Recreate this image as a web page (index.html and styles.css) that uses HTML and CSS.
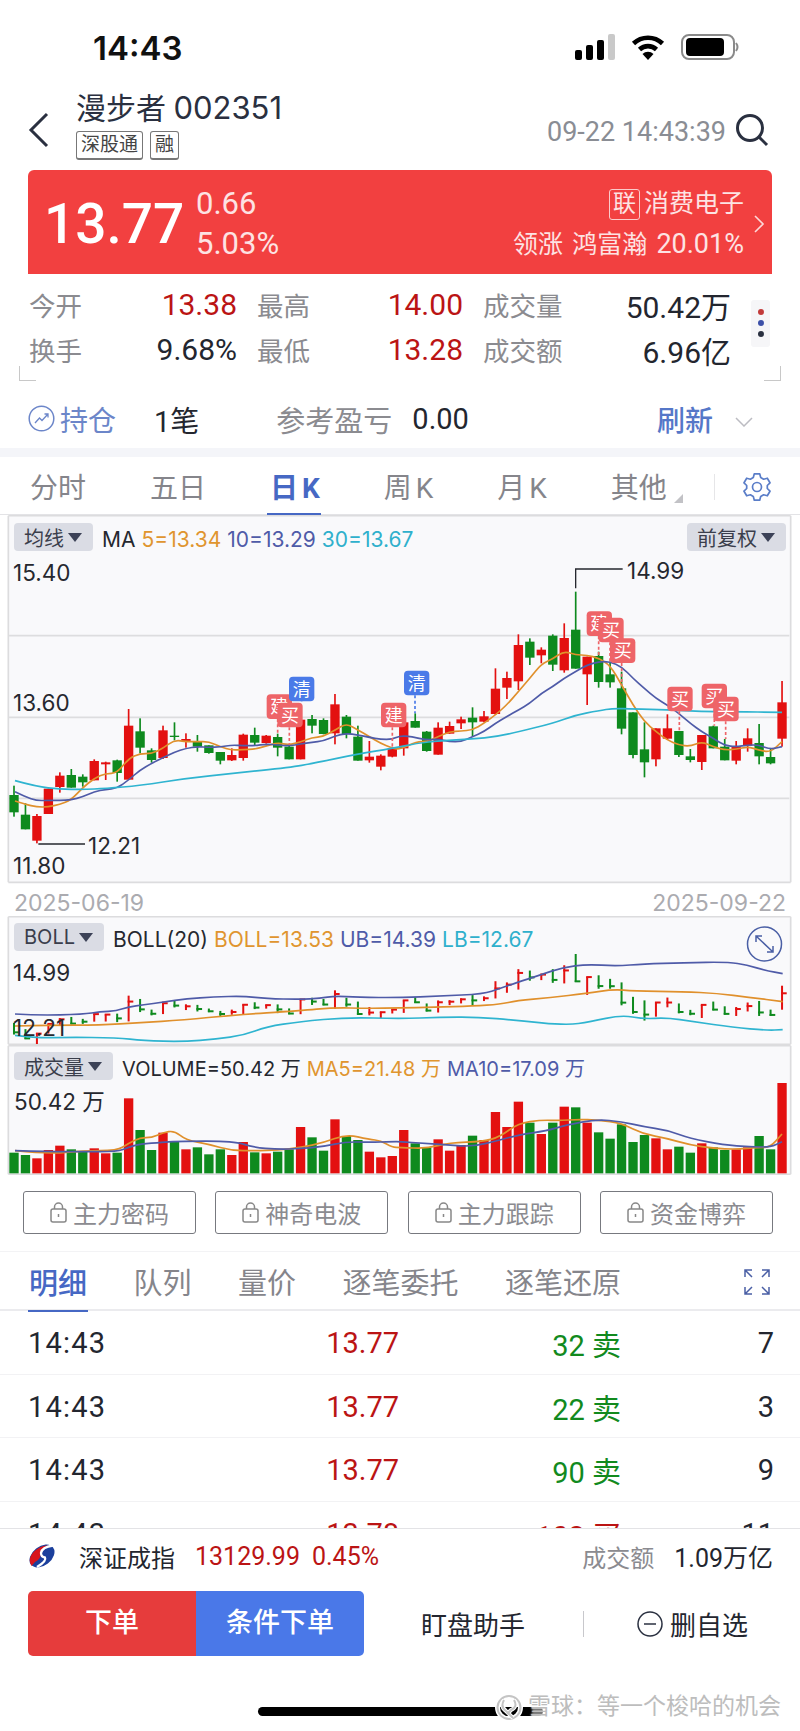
FILE: index.html
```html
<!DOCTYPE html>
<html lang="zh-CN">
<head>
    <meta charset="UTF-8">
    <meta name="viewport" content="width=device-width, initial-scale=1.0">
    <title>漫步者 002351</title>
    <link rel="stylesheet" href="styles.css">
</head>
<body>
    <div class="status-bar">
        <span class="clock">14:43</span>
        <div class="status-icons">
            <svg class="ico-signal" width="40" height="26" viewBox="0 0 40 26">
                <rect x="0" y="16" width="7" height="10" rx="2" fill="#000"/>
                <rect x="11" y="11" width="7" height="15" rx="2" fill="#000"/>
                <rect x="22" y="6" width="7" height="20" rx="2" fill="#000"/>
                <rect x="33" y="0" width="7" height="26" rx="2" fill="#c9c9c9"/>
            </svg>
            <svg class="ico-wifi" width="34" height="26" viewBox="0 0 34 26">
                <path d="M2.5 9.5 A21 21 0 0 1 31.5 9.5" fill="none" stroke="#000" stroke-width="4.6"/>
                <path d="M8.5 15.5 A12.5 12.5 0 0 1 25.5 15.5" fill="none" stroke="#000" stroke-width="4.6"/>
                <path d="M17 26 L11.5 20 A8 8 0 0 1 22.5 20 Z" fill="#000"/>
            </svg>
            <svg class="ico-battery" width="58" height="26" viewBox="0 0 58 26">
                <rect x="1" y="1" width="52" height="24" rx="7" fill="none" stroke="#8a8a8a" stroke-width="2"/>
                <rect x="5" y="4" width="38" height="18" rx="4" fill="#000"/>
                <path d="M55 9 Q58 13 55 17" fill="none" stroke="#8a8a8a" stroke-width="2"/>
            </svg>
        </div>
    </div>

    <div class="nav-bar">
        <svg class="back" width="22" height="36" viewBox="0 0 22 36">
            <path d="M19 2 L3 18 L19 34" fill="none" stroke="#2a3040" stroke-width="3"/>
        </svg>
        <div class="stock">
            <div class="stock-name">漫步者 <span class="code">002351</span></div>
            <div class="stock-tags">
                <span class="stock-tag">深股通</span>
                <span class="stock-tag">融</span>
            </div>
        </div>
        <span class="timestamp">09-22 14:43:39</span>
        <svg class="search" width="34" height="34" viewBox="0 0 34 34">
            <circle cx="15" cy="15" r="12.5" fill="none" stroke="#2a3040" stroke-width="3"/>
            <path d="M24 24 L32 32" stroke="#2a3040" stroke-width="3"/>
        </svg>
    </div>

    <div class="quote">
        <div class="quote-price">13.77</div>
        <div class="quote-change">
            <span>0.66</span>
            <span>5.03%</span>
        </div>
        <div class="quote-sector">
            <div class="sector-name"><span class="sector-tag">联</span>消费电子</div>
            <div class="sector-lead">领涨 鸿富瀚 <span class="lead-pct">20.01%</span></div>
        </div>
        <svg class="quote-arrow" width="12" height="18" viewBox="0 0 12 18">
            <path d="M2 1 L10 9 L2 17" fill="none" stroke="#fff" stroke-opacity=".8" stroke-width="1.6"/>
        </svg>
    </div>

    <div class="stats">
        <div class="stats-grid">
            <div class="stat"><span class="stat-label">今开</span><span class="up">13.38</span></div>
            <div class="stat"><span class="stat-label">最高</span><span class="up">14.00</span></div>
            <div class="stat"><span class="stat-label">成交量</span><span>50.42万</span></div>
            <div class="stat"><span class="stat-label">换手</span><span>9.68%</span></div>
            <div class="stat"><span class="stat-label">最低</span><span class="up">13.28</span></div>
            <div class="stat"><span class="stat-label">成交额</span><span>6.96亿</span></div>
        </div>
        <div class="stat-dots"><i class="dot-red"></i><i class="dot-blue"></i><i class="dot-dark"></i></div>
    </div>

    <div class="position">
        <svg class="pos-icon" width="27" height="27" viewBox="0 0 27 27">
            <circle cx="13.500" cy="13.500" r="12.300" fill="none" stroke="#6c86c9" stroke-width="1.500"/>
            <path d="M7 18 L11.500 13 L14 15.500 L20 9 M16.500 9 H20 V12.500" fill="none" stroke="#6c86c9" stroke-width="1.300"/>
        </svg>
        <span class="pos-title">持仓</span>
        <span class="pos-count">1笔</span>
        <span class="pos-label">参考盈亏</span>
        <span class="pos-value">0.00</span>
        <span class="pos-refresh">刷新</span>
        <svg class="pos-chevron" width="18" height="10" viewBox="0 0 18 10">
            <path d="M1 1 L9 9 L17 1" fill="none" stroke="#bcbcc2" stroke-width="1.500"/>
        </svg>
    </div>

    <div class="band"></div>

    <div class="periods">
        <span class="period">分时</span>
        <span class="period">五日</span>
        <span class="period active">日 K</span>
        <span class="period">周 K</span>
        <span class="period">月 K</span>
        <span class="period more">其他</span>
        <span class="period-divider"></span>
        <svg class="gear" width="30" height="30" viewBox="0 0 30 30">
            <path d="M12.300 1.800 H17.700 L18.700 5.500 L21.600 7.200 L25.300 6.200 L28 10.800 L25.300 13.500 V16.500 L28 19.200 L25.300 23.800 L21.600 22.800 L18.700 24.500 L17.700 28.200 H12.300 L11.300 24.500 L8.400 22.800 L4.700 23.800 L2 19.200 L4.700 16.500 V13.500 L2 10.800 L4.700 6.200 L8.400 7.200 L11.300 5.500 Z" fill="none" stroke="#5a7dc8" stroke-width="1.700" stroke-linejoin="round"/>
            <circle cx="15" cy="15" r="4.500" fill="none" stroke="#5a7dc8" stroke-width="1.700"/>
        </svg>
    </div>

    <div class="charts">
        <div class="pane pane-main">
            <svg id="mainChart" class="chart-svg" viewBox="0 0 2400 1203"></svg>
            <div class="pane-head">
                <span class="select-btn">均线<i class="caret"></i></span>
                <span class="legend-item">MA</span>
                <span class="legend-item c-orange">5=13.34</span>
                <span class="legend-item c-indigo">10=13.29</span>
                <span class="legend-item c-cyan">30=13.67</span>
            </div>
            <span class="select-btn adjust-btn">前复权<i class="caret"></i></span>
            <span class="axis main-top">15.40</span>
            <span class="axis main-mid">13.60</span>
            <span class="axis main-bottom">11.80</span>
            <span class="axis main-high">14.99</span>
            <span class="axis main-low">12.21</span>
            <span class="date date-start">2025-06-19</span>
            <span class="date date-end">2025-09-22</span>
        </div>

        <div class="pane pane-boll">
            <svg id="bollChart" class="chart-svg" viewBox="0 18 2400 387"></svg>
            <div class="pane-head">
                <span class="select-btn">BOLL<i class="caret"></i></span>
                <span class="legend-item">BOLL(20)</span>
                <span class="legend-item c-orange">BOLL=13.53</span>
                <span class="legend-item c-indigo">UB=14.39</span>
                <span class="legend-item c-cyan">LB=12.67</span>
            </div>
            <span class="axis boll-top">14.99</span>
            <span class="axis boll-bottom">12.21</span>
            <svg class="expand-btn" width="37" height="36" viewBox="0 0 37 36">
                <circle cx="18.500" cy="18" r="17" fill="none" stroke="#4a5fa5" stroke-width="1.500"/>
                <path d="M10 10 L27 26 M10 16 V10 H16 M27 20 V26 H21" fill="none" stroke="#4a5fa5" stroke-width="1.500"/>
            </svg>
        </div>

        <div class="pane pane-vol">
            <svg id="volChart" class="chart-svg" viewBox="0 405 2400 390"></svg>
            <div class="pane-head">
                <span class="select-btn">成交量<i class="caret"></i></span>
                <span class="legend-item">VOLUME=50.42 万</span>
                <span class="legend-item c-orange">MA5=21.48 万</span>
                <span class="legend-item c-indigo">MA10=17.09 万</span>
            </div>
            <span class="axis vol-top">50.42 万</span>
        </div>
    </div>

    <div class="tools">
        <span class="tool-btn"><svg class="lock" width="17" height="21" viewBox="0 0 17 21"><rect x="1" y="7" width="15" height="13" rx="2" fill="none" stroke="#888" stroke-width="1.500"/><path d="M4.500 7 V5 A4 4 0 0 1 12.500 5 V7 M8.500 12 V15" fill="none" stroke="#888" stroke-width="1.500"/></svg>主力密码</span>
        <span class="tool-btn"><svg class="lock" width="17" height="21" viewBox="0 0 17 21"><rect x="1" y="7" width="15" height="13" rx="2" fill="none" stroke="#888" stroke-width="1.500"/><path d="M4.500 7 V5 A4 4 0 0 1 12.500 5 V7 M8.500 12 V15" fill="none" stroke="#888" stroke-width="1.500"/></svg>神奇电波</span>
        <span class="tool-btn"><svg class="lock" width="17" height="21" viewBox="0 0 17 21"><rect x="1" y="7" width="15" height="13" rx="2" fill="none" stroke="#888" stroke-width="1.500"/><path d="M4.500 7 V5 A4 4 0 0 1 12.500 5 V7 M8.500 12 V15" fill="none" stroke="#888" stroke-width="1.500"/></svg>主力跟踪</span>
        <span class="tool-btn"><svg class="lock" width="17" height="21" viewBox="0 0 17 21"><rect x="1" y="7" width="15" height="13" rx="2" fill="none" stroke="#888" stroke-width="1.500"/><path d="M4.500 7 V5 A4 4 0 0 1 12.500 5 V7 M8.500 12 V15" fill="none" stroke="#888" stroke-width="1.500"/></svg>资金博弈</span>
    </div>

    <div class="detail-tabs">
        <span class="detail-tab active">明细</span>
        <span class="detail-tab">队列</span>
        <span class="detail-tab">量价</span>
        <span class="detail-tab">逐笔委托</span>
        <span class="detail-tab">逐笔还原</span>
        <svg class="fullscreen" width="26" height="26" viewBox="0 0 26 26">
            <path d="M1 8 V1 H8 M1 1 L8 8 M25 8 V1 H18 M25 1 L18 8 M1 18 V25 H8 M1 25 L8 18 M25 18 V25 H18 M25 25 L18 18" fill="none" stroke="#4a5fa5" stroke-width="1.500"/>
        </svg>
    </div>

    <div class="trades">
        <div class="trade"><span class="trade-time">14:43</span><span class="up">13.77</span><span class="down">32 卖</span><span>7</span></div>
        <div class="trade"><span class="trade-time">14:43</span><span class="up">13.77</span><span class="down">22 卖</span><span>3</span></div>
        <div class="trade"><span class="trade-time">14:43</span><span class="up">13.77</span><span class="down">90 卖</span><span>9</span></div>
        <div class="trade"><span class="trade-time">14:43</span><span class="up">13.78</span><span class="up">102 买</span><span>11</span></div>
    </div>

    <div class="footer">
        <div class="index-row">
            <svg class="index-logo" width="27" height="24" viewBox="0 0 27 24">
                <ellipse cx="14" cy="12" rx="14" ry="9.500" transform="rotate(-38 14 12)" fill="#1b3f9c"/>
                <path d="M3.500 22 Q-1 15 6 7.500 Q13 1 20 1.500 Q12 5 12.500 10 Q13 15 7 18 Z" fill="#d8141c"/>
                <path d="M25 1.500 Q14 3 13 9 Q13 13 17 13.500 Q19 17 9 23" fill="none" stroke="#fff" stroke-width="2.300"/>
            </svg>
            <span class="index-name">深证成指</span>
            <span class="up index-value">13129.99</span>
            <span class="up">0.45%</span>
            <span class="index-label">成交额</span>
            <span>1.09万亿</span>
        </div>
        <div class="action-row">
            <div class="order-btns">
                <span class="order-btn order-red">下单</span>
                <span class="order-btn order-blue">条件下单</span>
            </div>
            <span class="action-text">盯盘助手</span>
            <span class="action-divider"></span>
            <span class="action-fav">
                <svg width="26" height="26" viewBox="0 0 26 26">
                    <circle cx="13" cy="13" r="12" fill="none" stroke="#2a3040" stroke-width="1.500"/>
                    <path d="M7 13 H19" stroke="#2a3040" stroke-width="1.500"/>
                </svg>
                删自选
            </span>
        </div>
        <div class="home-bar"></div>
        <div class="watermark">
            <svg class="watermark-logo" width="30" height="27" viewBox="0 0 30 27">
                <circle cx="15" cy="13.500" r="11.500" fill="none" stroke="#fff" stroke-width="5"/>
                <circle cx="15" cy="13.500" r="11.500" fill="none" stroke="#c4c4c4" stroke-width="2"/>
                <path d="M10 6 Q6 13 12 17 L19 24 M20 6 Q24 13 17 16 L13 20" fill="none" stroke="#fff" stroke-width="4"/>
                <path d="M10 6 Q6 13 12 17 L19 24 M20 6 Q24 13 17 16 L13 20" fill="none" stroke="#c4c4c4" stroke-width="2"/>
            </svg>
            <span>雪球：等一个梭哈的机会</span>
        </div>
    </div>

    <script src="chart.js"></script>
</body>
</html>
```
FILE: styles.css
```css
* {
    box-sizing: border-box;
}
body {
    margin: 0;
    width: 800px;
    height: 1731px;
    overflow: hidden;
    background-color: #fff;
    color: #23262f;
    font-family: Roboto, "Noto Sans CJK SC", sans-serif;
}
.up {
    color: #bb1414;
}
.down {
    color: #128a1e;
}

/* status bar */
.status-bar {
    height: 85px;
    padding: 31px 61px 0 93px;
    display: flex;
    justify-content: space-between;
}
.clock {
    font-family: Inter, sans-serif;
    font-size: 33px;
    font-weight: 600;
    line-height: 34px;
    color: #111;
}
.status-icons {
    display: flex;
    gap: 16px;
    margin-top: 3px;
    height: 26px;
}

/* title */
.nav-bar {
    height: 85px;
    padding-left: 28px;
    display: flex;
    position: relative;
}
.back {
    margin-top: 27px;
}
.stock {
    margin-left: 26px;
}
.stock-name {
    font-size: 30px;
    line-height: 38px;
    margin-top: 4px;
    color: #2a3040;
}
.code {
    font-family: Inter, sans-serif;
    font-size: 31px;
}
.stock-tags {
    display: flex;
    gap: 7px;
    margin-top: 3px;
}
.stock-tag {
    height: 29px;
    padding: 0 4px;
    border: 1px solid #777;
    border-bottom-width: 2px;
    border-radius: 3px;
    font-size: 19px;
    line-height: 26px;
    color: #444;
}
.timestamp {
    margin: 31px 0 0 auto;
    font-size: 27px;
    line-height: 32px;
    color: #8a8d94;
}
.search {
    margin: 28px 31px 0 9px;
}

/* red quote box */
.quote {
    height: 104px;
    margin: 0 28px;
    padding-left: 16px;
    background-color: #f24040;
    border-radius: 6px 6px 0 0;
    color: #fff;
    display: flex;
    position: relative;
}
.quote-price {
    font-size: 55px;
    font-weight: 500;
    line-height: 104px;
    width: 152px;
    padding-top: 2px;
}
.quote-change {
    display: flex;
    flex-direction: column;
    gap: 6px;
    padding-top: 17px;
    font-size: 31px;
    line-height: 34px;
    color: #fde3e3;
}
.quote-sector {
    margin-left: auto;
    margin-right: 28px;
    padding-top: 18px;
    text-align: right;
    font-size: 25px;
    line-height: 34px;
    color: #fde3e3;
}
.sector-name {
    display: flex;
    justify-content: flex-end;
    align-items: center;
    gap: 4px;
    margin-bottom: 7px;
    height: 32px;
}
.sector-lead {
    word-spacing: 3px;
}
.lead-pct {
    font-size: 27px;
}
.sector-tag {
    width: 31px;
    height: 31px;
    border: 1px solid #fbcaca;
    border-radius: 3px;
    font-size: 23px;
    line-height: 28px;
    text-align: center;
}
.quote-arrow {
    position: absolute;
    right: 7px;
    top: 45px;
}

/* open/high/low */
.stats {
    height: 111px;
    padding: 8px 0 0 29px;
    display: flex;
    position: relative;
}
.stats::before,
.stats::after {
    content: "";
    position: absolute;
    top: 92px;
    width: 16px;
    height: 14px;
    border-bottom: 1px solid #c8c8c8;
}
.stats::before {
    left: 19px;
    border-left: 1px solid #c8c8c8;
}
.stats::after {
    right: 19px;
    border-right: 1px solid #c8c8c8;
}
.stats-grid {
    display: grid;
    grid-template-columns: 208px 206px 248px;
    grid-auto-rows: 45px;
    column-gap: 20px;
    font-size: 30px;
}
.stat {
    display: flex;
    justify-content: space-between;
    align-items: center;
}
.stat-label {
    font-size: 26.5px;
    color: #8b8b90;
}
.stat-dots {
    width: 19px;
    height: 47px;
    margin: 18px 0 0 20px;
    padding-top: 9px;
    background-color: #f6f6f8;
    border-radius: 3px;
    display: flex;
    flex-direction: column;
    align-items: center;
    gap: 5px;
}
.stat-dots i {
    width: 6px;
    height: 6px;
    border-radius: 50%;
}
.dot-red {
    background-color: #c23a3a;
}
.dot-blue {
    background-color: #3c50a8;
}
.dot-dark {
    background-color: #2a3040;
}

/* position row */
.position {
    height: 63px;
    padding: 4px 0 0 28px;
    display: flex;
    align-items: center;
    font-size: 29px;
}
.pos-title {
    margin-left: 5px;
    font-size: 28px;
    color: #6c86c9;
}
.pos-count {
    margin-left: 38px;
}
.pos-label {
    margin-left: 77px;
    font-size: 29px;
    color: #8b8b90;
}
.pos-value {
    margin-left: 20px;
}
.pos-refresh {
    margin-left: auto;
    font-size: 28px;
    font-weight: 500;
    color: #5577c8;
}
.pos-chevron {
    margin: 6px 47px 0 22px;
}
.band {
    height: 9px;
    background-color: #f4f5f9;
}

/* period tabs */
.periods {
    height: 58px;
    padding-left: 30px;
    display: flex;
    align-items: center;
    gap: 64px;
    font-size: 28px;
    word-spacing: -3px;
    color: #85858b;
    border-bottom: 1px solid #e3e3e6;
    position: relative;
}
.period.active {
    font-weight: 700;
    color: #4668c4;
    position: relative;
}
.period.active::after {
    content: "";
    position: absolute;
    left: -3px;
    right: -1px;
    bottom: -11px;
    height: 4px;
    background-color: #4668c4;
}
.period.more {
    position: relative;
}
.period.more::after {
    content: "";
    position: absolute;
    right: -16px;
    bottom: 3px;
    border-left: 9px solid transparent;
    border-bottom: 9px solid #c2c2c6;
}
.period-divider {
    position: absolute;
    left: 714px;
    top: 17px;
    width: 1px;
    height: 26px;
    background-color: #e6e6e8;
}
.gear {
    position: absolute;
    right: 28px;
    top: 15px;
}

/* charts */
.pane {
    position: relative;
}
.pane-main {
    height: 401px;
}
.pane-boll {
    height: 129px;
}
.pane-vol {
    height: 130px;
}
.chart-svg {
    display: block;
    width: 100%;
    height: 100%;
}
.pane-head {
    position: absolute;
    left: 14px;
    top: 8px;
    display: flex;
    align-items: flex-start;
    gap: 6px;
    font-family: Inter, "Noto Sans CJK SC", sans-serif;
    font-size: 21px;
    color: #26282f;
}
.pane-boll .pane-head,
.pane-vol .pane-head {
    top: 7px;
}
.pane-vol .pane-head {
    font-size: 20px;
}
.legend-item {
    padding-top: 3px;
    line-height: 28px;
}
.select-btn {
    height: 28px;
    padding: 0 11px 0 10px;
    background-color: #dadce4;
    border-radius: 4px;
    display: flex;
    align-items: center;
    gap: 4px;
    font-size: 20px;
    color: #3a3e4c;
    margin-right: 3px;
}
.caret {
    width: 0;
    height: 0;
    border-left: 7px solid transparent;
    border-right: 7px solid transparent;
    border-top: 9px solid #3c4257;
}
.adjust-btn {
    position: absolute;
    right: 14px;
    top: 8px;
    margin: 0;
    font-family: Inter, "Noto Sans CJK SC", sans-serif;
}
.c-orange {
    color: #e0952f;
}
.c-indigo {
    color: #4f5ba8;
}
.c-cyan {
    color: #2fb0cc;
}
.axis {
    position: absolute;
    font-family: Inter, "Noto Sans CJK SC", sans-serif;
    font-size: 22.5px;
    line-height: 24px;
    color: #26282f;
}
.main-top {
    left: 13px;
    top: 46px;
}
.main-mid {
    left: 13px;
    top: 176px;
}
.main-bottom {
    left: 13px;
    top: 339px;
}
.main-high {
    left: 627px;
    top: 44px;
}
.main-low {
    left: 88px;
    top: 319px;
}
.date {
    position: absolute;
    top: 375px;
    font-family: Inter, sans-serif;
    font-size: 23px;
    line-height: 26px;
    color: #ababb0;
}
.date-start {
    left: 14px;
}
.date-end {
    right: 14px;
}
.boll-top {
    left: 13px;
    top: 45px;
}
.boll-bottom {
    left: 13px;
    top: 100px;
}
.expand-btn {
    position: absolute;
    right: 17px;
    top: 10px;
}
.vol-top {
    left: 14px;
    top: 45px;
}

/* locked tools */
.tools {
    height: 77px;
    padding: 16px 27px 0 23px;
    display: flex;
    justify-content: space-between;
    border-bottom: 1px solid #f3f3f5;
}
.tool-btn {
    width: 173px;
    height: 43px;
    border: 1.5px solid #77797f;
    border-radius: 3px;
    display: flex;
    justify-content: center;
    align-items: center;
    gap: 6px;
    font-size: 24px;
    color: #8b8b90;
}

/* trade details */
.detail-tabs {
    height: 59px;
    padding-left: 29px;
    display: flex;
    align-items: center;
    gap: 46.5px;
    font-size: 29px;
    color: #85858b;
    border-bottom: 2px solid #ebebee;
    position: relative;
}
.detail-tab.active {
    font-weight: 500;
    color: #4668c4;
    position: relative;
}
.detail-tab.active::after {
    content: "";
    position: absolute;
    left: -1px;
    right: -1px;
    bottom: -10px;
    height: 2px;
    background-color: #4668c4;
}
.fullscreen {
    position: absolute;
    right: 30px;
    top: 17px;
}
.trades {
    height: 217px;
    overflow: hidden;
}
.trade {
    height: 63.5px;
    padding: 2px 0 0 28px;
    display: grid;
    grid-template-columns: 77px 294px 222px 153px;
    align-items: center;
    font-size: 29px;
    border-bottom: 1.5px solid #f2f2f4;
}
.trade-time {
    letter-spacing: 1.2px;
}
.trade span:not(:first-child) {
    text-align: right;
}

/* bottom bar */
.footer {
    height: 203px;
    border-top: 1.5px solid #e3e3e6;
    position: relative;
}
.index-row {
    height: 62px;
    padding: 0 27px 8px 28px;
    display: flex;
    align-items: center;
    font-size: 25px;
}
.index-name {
    margin-left: 24px;
    font-size: 24px;
}
.index-value {
    margin-left: 20px;
    margin-right: 12px;
}
.index-label {
    margin-left: auto;
    margin-right: 20px;
    font-size: 24px;
    color: #8b8b90;
}
.action-row {
    padding-left: 28px;
    display: flex;
    align-items: center;
    height: 65px;
}
.order-btns {
    display: flex;
    width: 336px;
    height: 65px;
    border-radius: 5px;
    overflow: hidden;
}
.order-btn {
    flex: 1;
    color: #fff;
    font-size: 27px;
    font-weight: 500;
    line-height: 65px;
    text-align: center;
}
.order-red {
    background-color: #e63c3c;
}
.order-blue {
    background-color: #4a78e8;
}
.action-text {
    margin-left: 57px;
    font-size: 26px;
}
.action-divider {
    width: 1px;
    height: 26px;
    margin-left: 58px;
    background-color: #c8c8cc;
}
.action-fav {
    margin-left: 53px;
    display: flex;
    align-items: center;
    gap: 7px;
    font-size: 26px;
}
.home-bar {
    position: absolute;
    left: 258px;
    top: 178px;
    width: 285px;
    height: 9px;
    background-color: #000;
    border-radius: 5px;
}
.watermark {
    position: absolute;
    left: 494px;
    top: 164px;
    display: flex;
    align-items: center;
    gap: 4px;
    white-space: nowrap;
    font-size: 23px;
    line-height: 28px;
    color: #bdbdbd;
    text-shadow: 0 0 2px #fff, 0 0 2px #fff;
}
.watermark-logo {
    flex-shrink: 0;
}
```
FILE: chart.js
```js
// all chart numbers are in 1/3 px so they can be read straight off the picture
const NS = 'http://www.w3.org/2000/svg';
const RED = '#e31010';
const GREEN = '#0e8a1e';
const ORANGE = '#e0902c';
const INDIGO = '#4f5ba8';
const CYAN = '#2fb4d0';

// top, bottom, high, low, colour
const candles = [
    [840,892,812,905,'g'],[899,943,865,943,'g'],[903,977,897,985,'r'],[821,897,821,897,'r'],
    [782,816,772,833,'r'],[780,818,762,818,'g'],[785,802,778,815,'g'],[738,796,733,796,'r'],
    [742,748,740,795,'r'],[736,774,734,800,'g'],[632,794,582,794,'r'],[649,698,610,715,'g'],
    [706,735,700,743,'g'],[646,729,632,732,'r'],[662,666,622,676,'g'],[672,678,655,698,'r'],
    [678,695,660,710,'g'],[691,714,691,716,'g'],[711,737,711,748,'g'],[720,736,700,738,'r'],
    [659,729,656,737,'r'],[660,683,638,690,'g'],[662,684,660,686,'r'],[666,698,656,724,'g'],
    [695,733,690,733,'g'],[614,733,614,733,'r'],[612,632,600,655,'g'],[615,657,610,658,'g'],
    [568,655,537,688,'r'],[605,657,600,670,'g'],[665,737,632,737,'g'],[725,736,678,743,'r'],
    [722,755,718,766,'r'],[700,725,695,727,'r'],[622,700,622,722,'r'],[618,638,595,638,'g'],
    [650,708,648,710,'g'],[638,719,622,719,'r'],[633,656,620,656,'r'],[613,625,605,642,'r'],
    [608,622,577,664,'g'],[604,620,588,622,'r'],[521,597,460,600,'r'],[489,518,470,552,'r'],
    [390,499,358,525,'r'],[380,428,370,450,'g'],[404,421,397,445,'r'],[362,449,358,468,'g'],
    [369,466,325,473,'r'],[344,461,230,461,'g'],[425,478,425,570,'r'],[423,501,410,518,'g'],
    [478,502,440,518,'g'],[520,641,470,658,'g'],[592,720,592,730,'g'],[703,742,622,787,'g'],
    [640,733,640,754,'r'],[640,671,598,675,'r'],[648,720,648,726,'g'],[724,735,702,742,'g'],
    [660,741,660,765,'r'],[634,700,632,700,'g'],[695,736,672,736,'g'],[695,737,678,748,'r'],
    [670,692,640,710,'r'],[684,724,627,748,'g'],[726,745,700,748,'g'],[562,671,498,695,'r']
];

const volumes = [
    728,735,745,720,707,718,725,715,730,728,565,660,720,668,695,718,712,733,718,735,696,727,730,725,
    718,651,682,722,628,678,690,725,742,738,660,700,712,688,722,705,677,690,606,651,575,638,672,638,
    590,592,638,667,686,643,696,675,685,718,710,728,700,712,720,718,712,678,718,519
];

const maLines = [
    [ORANGE, '45,858 76,868 110,876 145,876 179,868 213,855 248,818 283,790 317,775 351,775 386,730 420,716 455,716 489,700 523,675 558,680 592,680 627,680 661,695 695,706 730,703 764,703 798,693 833,683 867,690 902,680 936,668 970,665 1005,645 1039,625 1074,645 1108,665 1142,685 1177,700 1200,703 1250,680 1280,680 1314,665 1348,650 1383,648 1417,645 1452,625 1486,600 1520,570 1555,530 1589,490 1624,447 1658,432 1692,408 1727,420 1761,420 1796,430 1830,450 1865,510 1899,570 1933,620 1968,650 2002,675 2036,690 2071,694 2105,680 2140,695 2174,705 2209,703 2243,695 2277,705 2311,712 2346,680'],
    [INDIGO, '45,830 76,845 110,857 145,856 179,856 213,855 248,845 283,830 317,823 351,820 386,795 420,765 455,745 489,728 523,712 558,700 592,695 627,697 661,696 695,690 730,692 764,692 798,687 833,690 867,693 902,687 936,682 970,678 1005,663 1039,655 1074,660 1108,667 1142,673 1177,673 1200,662 1235,665 1280,675 1314,672 1348,680 1383,680 1417,665 1452,650 1486,625 1520,605 1555,585 1589,565 1624,535 1658,515 1692,490 1727,470 1761,450 1796,440 1830,440 1865,455 1899,490 1933,520 1968,550 2002,570 2036,595 2071,625 2105,650 2140,670 2174,692 2209,695 2243,690 2277,690 2311,703 2346,695'],
    [CYAN, '45,797 110,815 179,822 248,824 317,820 420,812 558,790 700,775 870,757 940,745 1074,717 1177,700 1250,685 1320,677 1417,672 1490,665 1555,650 1658,625 1727,600 1796,587 1840,580 1900,582 2000,584 2105,590 2200,590 2346,592']
];

const bollLines = [
    [INDIGO, '45,312 110,316 250,313 300,305 350,303 386,290 430,285 490,276 560,266 640,261 730,258 800,266 900,268 960,265 1005,258 1074,262 1200,263 1320,258 1450,252 1500,235 1550,218 1620,195 1690,172 1760,163 1850,168 1930,162 2050,158 2185,156 2240,165 2300,182 2348,191'],
    [ORANGE, '45,348 150,346 300,345 420,338 550,330 700,315 900,302 1000,293 1100,295 1200,294 1300,292 1420,288 1500,283 1550,272 1650,263 1760,250 1840,238 1900,243 2050,245 2150,250 2250,262 2348,275'],
    [CYAN, '45,376 110,384 200,382 350,383 430,392 550,395 650,387 730,376 800,350 900,335 1040,322 1200,326 1320,322 1430,321 1550,331 1700,346 1770,335 1865,315 1930,327 2000,323 2080,335 2200,352 2300,361 2348,359']
];

const volLines = [
    [ORANGE, '45,722 145,732 250,722 351,722 386,700 420,683 455,683 489,668 523,662 558,690 627,703 695,722 764,722 833,720 902,713 970,698 1039,673 1108,688 1142,692 1177,712 1200,712 1280,716 1348,698 1450,695 1500,680 1555,640 1624,630 1680,632 1730,628 1796,630 1865,640 1930,672 2000,685 2070,705 2140,715 2209,718 2277,712 2311,712 2346,672'],
    [INDIGO, '45,722 145,725 250,725 351,725 386,712 420,702 489,697 523,694 700,693 760,712 833,718 902,716 970,710 1039,695 1108,697 1177,695 1200,695 1270,700 1348,705 1417,710 1500,690 1555,675 1640,662 1700,645 1790,628 1865,635 1930,650 2000,660 2070,685 2170,705 2250,710 2311,712 2346,695']
];

// left, top, text, colour, stem centre x, stem end y
const tags = [
    [800,538,'建','#ee6468',833,655],[832,563,'买','#ee6468',868,690],[867,485,'清','#4a7ae8',905,560],
    [1143,563,'建','#ee6468',1177,695],[1212,467,'清','#4a7ae8',1245,595],[1760,289,'建','#ee6468',1796,420],
    [1795,308,'买','#ee6468',1830,440],[1830,370,'买','#ee6468',1865,510],[2002,515,'买','#ee6468',2038,648],
    [2105,506,'买','#ee6468',2143,632],[2140,545,'买','#ee6468',2177,672]
];

function el(parent, name, attrs, text) {
    const node = document.createElementNS(NS, name);
    for (const key in attrs) node.setAttribute(key, attrs[key]);
    if (text) node.textContent = text;
    parent.appendChild(node);
    return node;
}

function candleX(i) {
    return 42 + 34.39 * i;
}

function colorOf(c) {
    return c[4] === 'r' ? RED : GREEN;
}

// rounds the corners of a polyline through midpoints
function smoothPath(points) {
    const pts = points.split(' ').map(p => p.split(',').map(Number));
    let d = `M${pts[0][0]} ${pts[0][1]}`;
    for (let i = 1; i < pts.length - 1; i++) {
        const mx = (pts[i][0] + pts[i + 1][0]) / 2;
        const my = (pts[i][1] + pts[i + 1][1]) / 2;
        d += ` Q${pts[i][0]} ${pts[i][1]} ${mx} ${my}`;
    }
    const last = pts[pts.length - 1];
    return d + ` L${last[0]} ${last[1]}`;
}

function drawLines(svg, lines) {
    lines.forEach(([color, points]) => {
        el(svg, 'path', { d: smoothPath(points), fill: 'none', stroke: color, 'stroke-width': 5, 'stroke-linejoin': 'round' });
    });
}

function drawFrame(svg, top, bottom) {
    el(svg, 'rect', { x: 27, y: top, width: 2345, height: bottom - top, fill: '#f9f9fb' });
    el(svg, 'path', { d: `M25 ${top} V${bottom} M2372 ${top} V${bottom} M25 ${top} H2372 M25 ${bottom} H2372`, fill: 'none', stroke: '#dcdcde', 'stroke-width': 5 });
}

function drawMain() {
    const svg = document.getElementById('mainChart');
    drawFrame(svg, 2, 1102);
    [362, 607, 850].forEach(y => {
        el(svg, 'path', { d: `M27 ${y} H2368`, stroke: '#dddddf', 'stroke-width': 5 });
    });
    candles.forEach((c, i) => {
        const x = candleX(i);
        el(svg, 'rect', { x: x - 2.5, y: c[2], width: 5, height: c[3] - c[2], fill: colorOf(c) });
        el(svg, 'rect', { x: x - 14, y: c[0], width: 28, height: c[1] - c[0], fill: colorOf(c) });
    });
    drawLines(svg, maLines);

    // extremes
    el(svg, 'path', { d: 'M115 987 H255 M1727 220 V162 H1868', fill: 'none', stroke: '#26282f', 'stroke-width': 4 });

    tags.forEach(([x, y, text, color, stemX, stemEnd]) => {
        el(svg, 'path', { d: `M${stemX} ${y + 74} V${stemEnd}`, stroke: color, 'stroke-width': 5, 'stroke-dasharray': '9 7' });
        el(svg, 'rect', { x, y, width: 76, height: 74, rx: 12, fill: color });
        el(svg, 'text', { x: x + 38, y: y + 57, fill: '#fff', 'font-size': 54, 'text-anchor': 'middle', 'font-family': '"Noto Sans CJK SC", sans-serif' }, text);
    });
}

function drawBoll() {
    const svg = document.getElementById('bollChart');
    drawFrame(svg, 20, 403);
    // same candles squeezed into the small pane
    const scale = y => 132 + (y - 230) * 0.355;
    candles.forEach((c, i) => {
        const x = candleX(i);
        const tickY = c[4] === 'r' ? scale(c[0]) : scale(c[1]);
        el(svg, 'rect', { x: x - 3, y: scale(c[2]), width: 6, height: scale(c[3]) - scale(c[2]) + 2, fill: colorOf(c) });
        el(svg, 'rect', { x: x - 3, y: tickY - 3, width: 17, height: 6, fill: colorOf(c) });
    });
    drawLines(svg, bollLines);
}

function drawVolume() {
    const svg = document.getElementById('volChart');
    drawFrame(svg, 407, 793);
    volumes.forEach((top, i) => {
        el(svg, 'rect', { x: candleX(i) - 14, y: top, width: 28, height: 790 - top, fill: colorOf(candles[i]) });
    });
    drawLines(svg, volLines);
}

drawMain();
drawBoll();
drawVolume();
```
